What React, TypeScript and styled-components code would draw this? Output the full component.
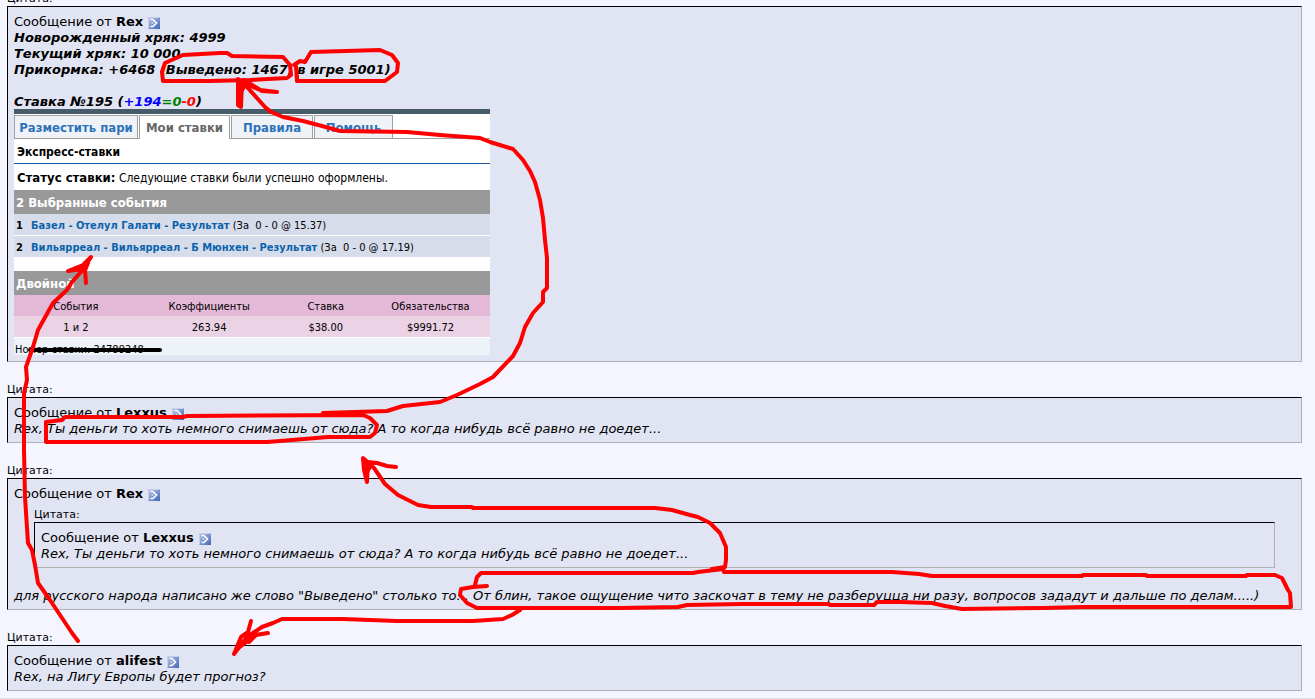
import React from "react";
import styled, { createGlobalStyle } from "styled-components";

const Global = createGlobalStyle`
  body { margin: 0; background: #f5f5ff; color: #000; overflow: hidden; }
  * { box-sizing: border-box; }
`;

const Page = styled.main`
  position: relative;
  font: 13px/16px Verdana, "DejaVu Sans", sans-serif;
  padding: 0 13px 7px 7px;
  margin-top: -10px;
  border-bottom: 1px solid #dcdce4;
`;
const Thread = styled.div`
  display: flex;
  flex-direction: column;
  gap: 19px;
`;
const Quote = styled.section<{ $nested?: boolean }>`
  margin: ${(p) => (p.$nested ? "4px 20px 20px" : "0")};
`;
const Label = styled.div`
  padding-top: 1px;
  font-size: 11px;
  line-height: 15px;
`;
const Box = styled.blockquote`
  margin: 0;
  padding: 7px 6px 5px;
  background: #e1e4f2;
  border: 1px solid;
  border-color: #000 #b0b0b0 #b0b0b0 #000;
`;
const Line = styled.p<{ $bold?: boolean; $italic?: boolean }>`
  margin: 0;
  min-height: 16px;
  font-weight: ${(p) => (p.$bold ? 700 : 400)};
  font-style: ${(p) => (p.$italic ? "italic" : "normal")};
`;
const Score = styled.span<{ $color: string }>`
  color: ${(p) => p.$color};
`;
const PostLink = styled.a`
  display: inline-block;
  height: 12px;
  margin-left: 5px;
  vertical-align: -3px;
  svg { display: block; }
`;

const Slip = styled.div`
  width: 476px;
  margin: -1px 0 1px;
  background: #fff;
  border-top: 5px solid #465c69;
  font-family: Tahoma, "DejaVu Sans Condensed", "DejaVu Sans", sans-serif;
  font-stretch: condensed;
`;
const Tabs = styled.nav`
  display: flex;
  gap: 1px;
  height: 25px;
  padding-top: 1px;
  border-bottom: 1px solid #a0a0a0;
`;
const Tab = styled.button<{ $active?: boolean; $width: number }>`
  width: ${(p) => p.$width}px;
  height: ${(p) => (p.$active ? 24 : 23)}px;
  padding: 1px 0 0;
  border: 1px solid #a0a0a0;
  border-bottom: 0;
  background: ${(p) => (p.$active ? "#fff" : "#eff3f7")};
  color: ${(p) => (p.$active ? "#666" : "#2d72b8")};
  font: inherit;
  font-size: 13px;
  font-weight: 700;
  white-space: nowrap;
`;
const SlipTitle = styled.h3`
  margin: 0;
  padding: 0 3px;
  height: 25px;
  font-size: 12px;
  line-height: 26px;
  border-bottom: 1px solid #1a5a9e;
`;
const Status = styled.p`
  margin: 0;
  padding: 0 3px;
  height: 26px;
  font-size: 12px;
  line-height: 28px;
  b { font-size: 13px; }
`;
const Bar = styled.h4`
  margin: 0;
  padding: 0 2px;
  height: 24px;
  background: #999;
  color: #fff;
  font-size: 13px;
  line-height: 26px;
`;
const Events = styled.ol`
  list-style: none;
  margin: 0 0 14px;
  padding: 0;
  display: grid;
  gap: 1px;
`;
const EventRow = styled.li`
  display: flex;
  height: 21px;
  padding-left: 2px;
  background: #d7dceb;
  font-size: 11px;
  line-height: 24px;
  white-space: pre;
`;
const Index = styled.b`
  width: 15px;
`;
const EventName = styled.a`
  color: #0a63ac;
  font-weight: 700;
  text-decoration: none;
`;
const Stakes = styled.table`
  width: 100%;
  table-layout: fixed;
  border-collapse: collapse;
  font-size: 11px;
  line-height: 19px;
  text-align: center;
  th, td { padding: 2px 0 0; height: 21px; font-weight: 400; }
  thead { background: #e4b9d7; }
  tbody { background: #ebd2e5; }
`;
const Ticket = styled.div`
  height: 17px;
  margin-top: 1px;
  padding-left: 1px;
  background: #edf3f6;
  font-size: 11px;
  line-height: 24px;
`;
const Ink = styled.svg`
  position: absolute;
  left: 0;
  top: 10px;
  pointer-events: none;
`;

const Author = ({ name }: { name: string }) => (
  <Line>
    Сообщение от <b>{name}</b>
    <PostLink href="#post" aria-label="Просмотр сообщения">
      <svg width="12" height="12" viewBox="0 0 12 12">
        <defs>
          <linearGradient id="post" x1="0" y1="0" x2="1" y2="1">
            <stop offset="0" stopColor="#bccbea" />
            <stop offset="1" stopColor="#4464b8" />
          </linearGradient>
        </defs>
        <rect width="12" height="12" fill="url(#post)" />
        <path d="M.5 11.5V.5h11" fill="none" stroke="#c5cfe8" />
        <path d="M2.5 2.5h2.3L8.5 6 4.8 9.5H2.5M4.5 5.5v1" fill="none" stroke="#fff" strokeWidth="1.6" />
      </svg>
    </PostLink>
  </Line>
);

const tabs = [
  { text: "Разместить пари", width: 124 },
  { text: "Мои ставки", width: 91, active: true },
  { text: "Правила", width: 82 },
  { text: "Помощь", width: 79 },
];

const BetSlip = () => (
  <Slip>
    <Tabs>
      {tabs.map((t) => (
        <Tab key={t.text} $width={t.width} $active={t.active}>{t.text}</Tab>
      ))}
    </Tabs>
    <SlipTitle>Экспресс-ставки</SlipTitle>
    <Status><b>Статус ставки:</b> Следующие ставки были успешно оформлены.</Status>
    <Bar>2 Выбранные события</Bar>
    <Events>
      <EventRow>
        <Index>1</Index>
        <EventName href="#e1">Базел - Отелул Галати - Результат</EventName> (За  0 - 0 @ 15.37)
      </EventRow>
      <EventRow>
        <Index>2</Index>
        <EventName href="#e2">Вильярреал - Вильярреал - Б Мюнхен - Результат</EventName> (За  0 - 0 @ 17.19)
      </EventRow>
    </Events>
    <Bar>Двойной</Bar>
    <Stakes>
      <colgroup>
        <col width="26%" />
        <col width="30%" />
        <col width="19%" />
        <col width="25%" />
      </colgroup>
      <thead>
        <tr><th>События</th><th>Коэффициенты</th><th>Ставка</th><th>Обязательства</th></tr>
      </thead>
      <tbody>
        <tr><td>1 и 2</td><td>263.94</td><td>$38.00</td><td>$9991.72</td></tr>
      </tbody>
    </Stakes>
    <Ticket>Номер ставки: 24789248</Ticket>
  </Slip>
);

// Freehand marker lines drawn over the thread.
const strokes = [
  "M163 81L162 72L165 63L174 59L183 55L220 53L227 53L232 56L283 57L290 65L291 75L287 78L250 80L210 81L163 81",
  "M297 81L296 66L294 65L300 61L305 62L311 52L380 50L392 55L398 63L397 72L385 81L297 81L297 76",
  "M238 79L238 105L241 107L242 82L260 90L277 92L262 91L244 80L247 87L265 107L271 112L283 117L303 121L322 126L340 131L407 132L440 135L480 138L490 142L513 149L523 160L530 171L535 182L540 200L543 218L545 240L547 258L547 288L543 292L543 302L533 313L525 327L520 343L513 356L493 377L480 384L457 395L440 402L403 406L387 411L323 413",
  "M46 442L46 422L62 420L65 417L183 417L187 416L363 415L370 418L377 425L375 433L370 437L328 437L280 441L267 442L46 442",
  "M712 569L725 567L726 560L726 547L720 533L710 523L698 517L690 515L672 510L655 508L473 508L472 507L431 507L418 505L398 495L385 484L374 468L363 458L364 470L367 482L368 462L377 463L387 466L396 467",
  "M487 586L473 587L461 589L460 595L467 603L477 608L620 608L678 607L687 605L742 604L829 604L830 605L874 605L877 602L900 602L932 603L945 606L962 609L1043 608L1083 607L1291 607L1290 593L1288 590L1282 578L1275 575L1247 575L1246 576L1147 576L1146 575L1083 575L1082 576L932 576L919 574L892 572L724 572L723 569L698 572L693 573L481 573L477 577L475 585",
  "M520 610L512 615L503 619L473 621L397 621L343 619L282 619L273 623L262 627L247 637L234 654L241 637L248 632L251 621L248 632L249 642L256 635L268 633L255 635L240 645",
  "M78 641L72 633L68 627L50 600L38 583L35 565L32 550L28 543L25 497L24 450L24 393L27 380L26 367L33 347L38 330L53 303L67 290L72 282L80 273L91 257L83 265L68 271L82 269L88 263L85 270L86 283",
];
const heads = "M238 79L249 82L241 96ZM363 458L375 463L368 474ZM91 257L81 268L86 274ZM248 632L258 636L236 652Z";

export default function App() {
  return (
    <>
      <Global />
      <Page>
        <Thread>
          <Quote>
            <Label>Цитата:</Label>
            <Box>
              <Author name="Rex" />
              <Line $bold $italic>Новорожденный хряк: 4999</Line>
              <Line $bold $italic>Текущий хряк: 10 000</Line>
              <Line $bold $italic>Прикормка: +6468 (Выведено: 1467, в игре 5001)</Line>
              <Line />
              <Line $bold $italic>
                Ставка №195 (<Score $color="#00f">+194</Score><Score $color="green">=0</Score><Score $color="red">-0</Score>)
              </Line>
              <BetSlip />
            </Box>
          </Quote>
          <Quote>
            <Label>Цитата:</Label>
            <Box>
              <Author name="Lexxus" />
              <Line $italic>Rex, Ты деньги то хоть немного снимаешь от сюда? А то когда нибудь всё равно не доедет...</Line>
            </Box>
          </Quote>
          <Quote>
            <Label>Цитата:</Label>
            <Box>
              <Author name="Rex" />
              <Quote $nested>
                <Label>Цитата:</Label>
                <Box>
                  <Author name="Lexxus" />
                  <Line $italic>Rex, Ты деньги то хоть немного снимаешь от сюда? А то когда нибудь всё равно не доедет...</Line>
                </Box>
              </Quote>
              <Line $italic>
                для русского народа написано же слово "Выведено" столько то... От блин, такое ощущение чито заскочат в тему не разберуцца ни разу, вопросов зададут и дальше по делам.....)
              </Line>
            </Box>
          </Quote>
          <Quote>
            <Label>Цитата:</Label>
            <Box>
              <Author name="alifest" />
              <Line $italic>Rex, на Лигу Европы будет прогноз?</Line>
            </Box>
          </Quote>
        </Thread>
        <Ink width="1315" height="699" viewBox="0 0 1315 699" aria-hidden="true">
          <path d="M30 350H160" stroke="#000" strokeWidth="4" strokeLinecap="round" />
          <g fill="none" stroke="#f00" strokeWidth="4" strokeLinecap="round" strokeLinejoin="round">
            {strokes.map((d) => (
              <path key={d} d={d} />
            ))}
          </g>
          <path d={heads} fill="#f00" />
        </Ink>
      </Page>
    </>
  );
}
